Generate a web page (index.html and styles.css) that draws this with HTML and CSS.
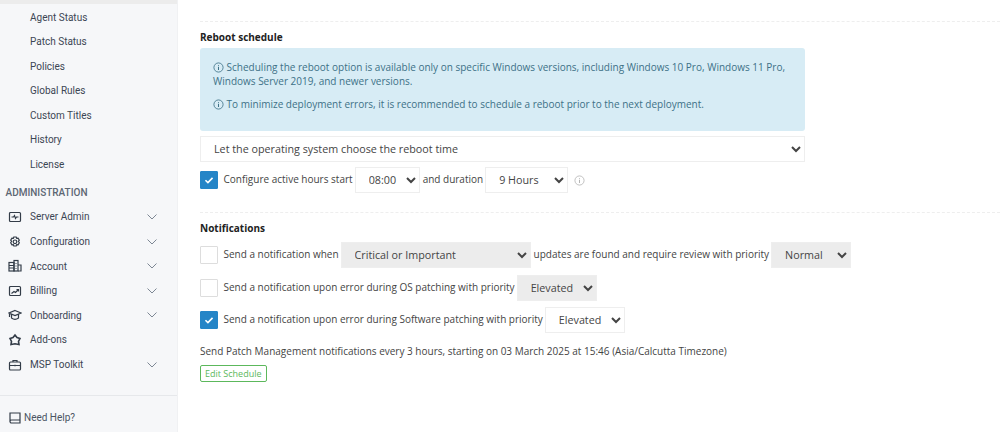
FILE: index.html
```html
<!DOCTYPE html>
<html lang="en">
<head>
<meta charset="UTF-8" />
<title>Patch Management Settings</title>
<link rel="stylesheet" href="styles.css">
</head>
<body>

<svg width="0" height="0" class="defs">
  <symbol id="chev" viewBox="0 0 12 12"><path d="M1.5 3.5 6 8l4.5-4.5" fill="none" stroke="currentColor" stroke-width="1"/></symbol>
  <symbol id="info" viewBox="0 0 12 12"><circle cx="6" cy="6" r="5" fill="none" stroke="currentColor" stroke-width=".9"/><path d="M6 5.2v3.6M6 3.2v1" stroke="currentColor" stroke-width="1.1"/></symbol>
  <symbol id="tick" viewBox="0 0 18 18"><path d="M5 9.3 7.8 12 13 6.6" fill="none" stroke="#fff" stroke-width="1.8"/></symbol>
</svg>

<div class="layout">
  <aside class="sidebar">
    <div class="active-strip"></div>
    <nav class="subnav">
      <a>Agent Status</a>
      <a>Patch Status</a>
      <a>Policies</a>
      <a>Global Rules</a>
      <a>Custom Titles</a>
      <a>History</a>
      <a>License</a>
    </nav>
    <div class="nav-heading">ADMINISTRATION</div>
    <nav class="mainnav">
      <a><svg class="nav-icon" viewBox="0 0 14 14"><rect x="1.5" y="2.5" width="11" height="9" rx="1"/><path d="M3.5 7h2l1-1.500 1 3 1-1.500h2"/></svg><span>Server Admin</span><svg class="chev"><use href="#chev"/></svg></a>
      <a><svg class="nav-icon" viewBox="0 0 14 14"><path d="M5.800 2h2.400l.5 1.300 1.400-.2 1.200 2-.9 1.100.9 1.600-1.200 2-1.400-.2-.5 1.400H5.800l-.5-1.400-1.400.2-1.200-2 .9-1.600-.9-1.100 1.200-2 1.400.2z"/><circle cx="7" cy="6.800" r="1.800"/></svg><span>Configuration</span><svg class="chev"><use href="#chev"/></svg></a>
      <a><svg class="nav-icon" viewBox="0 0 14 14"><rect x="1" y="3.500" width="5" height="8.500"/><rect x="6" y="1.500" width="4" height="10.500"/><path d="M10 6h3v6h-3M1 6.500h5M1 9h5M7.500 4.500h1M7.500 7h1M7.500 9.500h1"/></svg><span>Account</span><svg class="chev"><use href="#chev"/></svg></a>
      <a><svg class="nav-icon" viewBox="0 0 14 14"><rect x="1.500" y="2.500" width="11" height="9" rx="1"/><path d="M3.500 9.500 6 7.500l1.500 1 3-3M8.500 5.500h2v2"/></svg><span>Billing</span><svg class="chev"><use href="#chev"/></svg></a>
      <a><svg class="nav-icon" viewBox="0 0 14 14"><path d="M7 2.500 13 5 7 7.500 1 5zM3.500 6.500V10c2 1.500 5 1.500 7 0V6.500M1.500 5v4"/></svg><span>Onboarding</span><svg class="chev"><use href="#chev"/></svg></a>
      <a><svg class="nav-icon thick" viewBox="0 0 14 14"><path d="M7 2 9 4.500l3 1-1.500 3 .5 3L7 10.800 3 11.500l.5-3L2 5.500l3-1z"/></svg><span>Add-ons</span></a>
      <a><svg class="nav-icon" viewBox="0 0 14 14"><rect x="1.500" y="4" width="11" height="8" rx="1"/><path d="M5 4V2.500h4V4M1.500 7.500h11M7 6.800v1.500"/></svg><span>MSP Toolkit</span><svg class="chev"><use href="#chev"/></svg></a>
    </nav>
    <div class="help">
      <svg class="help-icon" viewBox="0 0 14 14"><path d="M2 11V2h10v10H3.500a1.500 1.500 0 0 1 0-3H12"/></svg>
      <span>Need Help?</span>
    </div>
  </aside>

  <main class="content">
    <section class="section">
      <h4>Reboot schedule</h4>
      <div class="alert">
        <p><svg class="info"><use href="#info"/></svg> Scheduling the reboot option is available only on specific Windows versions, including Windows 10 Pro, Windows 11 Pro, Windows Server 2019, and newer versions.</p>
        <p><svg class="info"><use href="#info"/></svg> To minimize deployment errors, it is recommended to schedule a reboot prior to the next deployment.</p>
      </div>
      <select class="field full"><option>Let the operating system choose the reboot time</option></select>
      <div class="row active-hours">
        <span class="check on"><svg><use href="#tick"/></svg></span>
        <span class="lbl">Configure active hours start</span>
        <select class="field w-time"><option>08:00</option></select>
        <span class="lbl">and duration</span>
        <select class="field w-hours"><option>9 Hours</option></select>
        <svg class="info muted"><use href="#info"/></svg>
      </div>
    </section>

    <section class="section">
      <h4 class="notify-title">Notifications</h4>
      <div class="row notify">
        <span class="check"></span>
        <span class="lbl">Send a notification when</span>
        <select class="field grey w-sev"><option>Critical or Important</option></select>
        <span class="lbl">updates are found and require review with priority</span>
        <select class="field grey w-prio"><option>Normal</option></select>
      </div>
      <div class="row notify">
        <span class="check"></span>
        <span class="lbl">Send a notification upon error during OS patching with priority</span>
        <select class="field grey w-prio"><option>Elevated</option></select>
      </div>
      <div class="row notify">
        <span class="check on"><svg><use href="#tick"/></svg></span>
        <span class="lbl">Send a notification upon error during Software patching with priority</span>
        <select class="field w-prio"><option>Elevated</option></select>
      </div>
      <p class="schedule">Send Patch Management notifications every 3 hours, starting on 03 March 2025 at 15:46 (Asia/Calcutta Timezone)</p>
      <button class="btn-edit">Edit Schedule</button>
    </section>
  </main>
</div>

</body>
</html>
```

FILE: styles.css
```css
html, body {
  margin: 0;
  height: 432px;
  overflow: hidden;
  background: #fff;
}
.defs {
  display: block;
  height: 0;
}
.layout {
  display: flex;
  height: 432px;
}

/* sidebar */
.sidebar {
  width: 177px;
  flex: none;
  display: flex;
  flex-direction: column;
  background: #f6f7f9;
  border-right: 1px solid #f0f1f3;
  font-family: Roboto, sans-serif;
  font-size: 10px;
  color: #3c4654;
}
.active-strip {
  height: 4px;
  background: #ececec;
}
.subnav {
  margin-bottom: 3px;
  padding-top: 1.5px;
}
.subnav a {
  display: block;
  height: 24.6px;
  line-height: 24.6px;
  padding-left: 30px;
}
.nav-heading {
  padding-left: 5.5px;
  height: 24px;
  line-height: 24px;
  font-weight: 500;
  color: #5c6673;
}
.mainnav a {
  display: flex;
  align-items: center;
  height: 24.6px;
  padding-left: 8px;
}
.mainnav span {
  flex: 1;
  margin-left: 8px;
}
.nav-icon {
  width: 14px;
  height: 14px;
  fill: none;
  stroke: #333c48;
  stroke-width: 1.2;
}
.nav-icon.thick {
  stroke-width: 1.6;
}
.chev {
  width: 12px;
  height: 12px;
  margin-right: 19.5px;
  color: #7d8794;
}
.help {
  margin-top: auto;
  height: 37px;
  border-top: 1px solid #e6e8eb;
  box-sizing: border-box;
  display: flex;
  align-items: center;
  padding: 7px 0 0 8px;
  color: #4b5563;
}
.help-icon {
  width: 14px;
  height: 14px;
  margin-right: 2px;
  fill: none;
  stroke: #333c48;
  stroke-width: 1.2;
}

/* main form */
.content {
  flex: 1;
  min-width: 0;
  padding-top: 21px;
  padding-left: 22px;
  font-family: "Open Sans", sans-serif;
  font-size: 10px;
  color: #444;
}
.section {
  border-top: 1px dashed #eeeeee;
}
.section h4 {
  margin: 0;
  padding-top: 8px;
  height: 18px;
  line-height: 15px;
  font-size: 10px;
  font-weight: 700;
  color: #222;
}
.section .notify-title {
  height: 21px;
}
.alert {
  width: 605px;
  height: 83px;
  box-sizing: border-box;
  padding: 12px 13px 0;
  background: #d7ecf5;
  border-radius: 3px;
  color: #3d7187;
  line-height: 14px;
}
.alert p {
  margin: 0 0 9px;
}
.info {
  width: 11px;
  height: 11px;
  vertical-align: -1.5px;
}
.info.muted {
  color: #b5b5b5;
  margin-left: 3px;
}
.field {
  height: 26px;
  box-sizing: border-box;
  border: 1px solid #eeeeee;
  border-radius: 0;
  background-color: #fff;
  padding: 0 4px 0 9px;
  font-family: "Open Sans", sans-serif;
  font-size: 10.75px;
  color: #444;
  outline: none;
}
.field.grey {
  background-color: #ececec;
}
.full {
  display: block;
  width: 605px;
  margin-top: 4.5px;
}
.row {
  display: flex;
  align-items: center;
  gap: 3px;
}
.active-hours {
  width: 605px;
  height: 26px;
  margin-top: 5.5px;
  margin-bottom: 19px;
}
.notify {
  height: 26px;
  margin-bottom: 6.5px;
}
.check {
  width: 18px;
  height: 18px;
  box-sizing: border-box;
  flex: none;
  margin-right: 2.5px;
  border: 1px solid #dddddd;
  border-radius: 1px;
  background: #fff;
}
.check.on {
  background: #2585c7;
  border-color: #2585c7;
}
.check svg {
  display: block;
  width: 16px;
  height: 16px;
}
.lbl {
  white-space: nowrap;
  margin-right: -1px;
  margin-bottom: 2px;
}
.w-time { width: 65px; }
.w-hours { width: 83px; }
.w-sev { width: 190px; }
.w-prio { width: 80px; }
.schedule {
  margin: 11px 0 7px;
  line-height: 14px;
}
.btn-edit {
  display: block;
  height: 17px;
  padding: 0 4px;
  background: #fff;
  border: 1px solid #5cb85c;
  border-radius: 2px;
  font-family: "Open Sans", sans-serif;
  font-size: 9px;
  color: #5cb85c;
}
```
